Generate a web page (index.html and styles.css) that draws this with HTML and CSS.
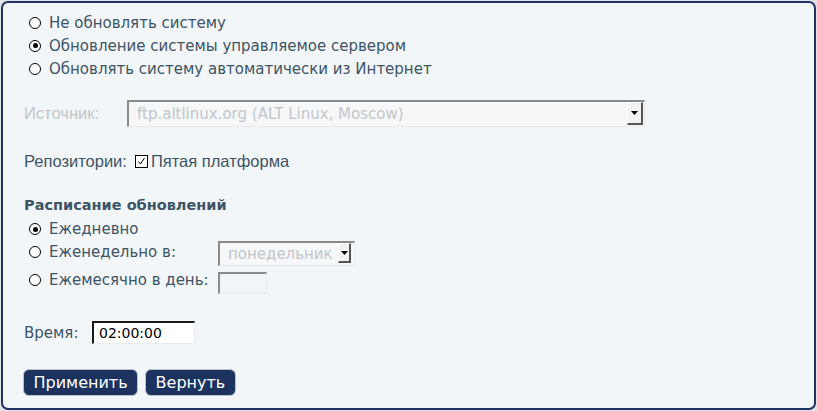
FILE: index.html
```html
<!DOCTYPE html>
<html>
<head>
<meta charset="utf-8">
<link rel="stylesheet" href="styles.css">
</head>
<body>
<div class="panel">
  <div class="radios top">
    <label class="radio"><span class="rb"></span>Не обновлять систему</label>
    <label class="radio"><span class="rb on"></span>Обновление системы управляемое сервером</label>
    <label class="radio"><span class="rb"></span>Обновлять систему автоматически из Интернет</label>
  </div>
  <div class="row source">
    <span class="lbl narrow disabled">Источник:</span>
    <div class="select big"><span class="val">ftp.altlinux.org (ALT Linux, Moscow)</span><span class="arrow"><svg width="7" height="4" viewBox="0 0 7 4"><path d="M0 0h7L3.5 4z" fill="#000"/></svg></span></div>
  </div>
  <div class="row repo">
    <span class="lbl narrow">Репозитории:</span>
    <span class="cb"><svg width="11" height="11" viewBox="0 0 11 11"><path d="M2.5 5.5l2 2.5 4-6" fill="none" stroke="#000" stroke-width="1"/></svg></span>
    <span class="narrow">Пятая платформа</span>
  </div>
  <div class="sched">
    <div class="heading">Расписание обновлений</div>
    <label class="radio r1"><span class="rb on"></span>Ежедневно</label>
    <div class="srow r2">
      <label class="radio"><span class="rb"></span>Еженедельно в:</label>
      <div class="select small"><span class="val">понедельник</span><span class="arrow"><svg width="7" height="4" viewBox="0 0 7 4"><path d="M0 0h7L3.5 4z" fill="#000"/></svg></span></div>
    </div>
    <div class="srow r3">
      <label class="radio"><span class="rb"></span>Ежемесячно в день:</label>
      <div class="field"></div>
    </div>
  </div>
  <div class="row time">
    <span class="lbl">Время:</span>
    <div class="timebox">02:00:00</div>
  </div>
  <div class="buttons">
    <button class="btn">Применить</button>
    <button class="btn">Вернуть</button>
  </div>
</div>
</body>
</html>
```
FILE: styles.css
```css
html, body { margin: 0; padding: 0; }
body {
  background: #dfe3e8;
  width: 817px;
  height: 411px;
  padding: 1px;
  box-sizing: border-box;
  font-family: "DejaVu Sans", sans-serif;
  font-size: 15px;
  color: #3d5466;
}
.panel {
  height: 409px;
  box-sizing: border-box;
  border: 2px solid #1f3360;
  border-radius: 7px;
  background: #f3f6f8;
  padding: 8px 0 0 21px;
}
.narrow { font-family: "Liberation Sans Narrow", "Liberation Sans", sans-serif; font-size: 16.5px; }
.disabled { color: #c2c6ca; }
.radios.top { display: flex; flex-direction: column; }
.radio { display: flex; align-items: center; height: 23px; padding-left: 5px; }
.rb {
  width: 10px; height: 10px; border: 1px solid #000; border-radius: 50%;
  background: #fff; margin-right: 8px; position: relative; flex: none;
}
.rb.on::after {
  content: ""; position: absolute; left: 2.5px; top: 2.5px; width: 5px; height: 5px;
  background: #000; border-radius: 50%;
}
.row { display: flex; align-items: center; }
.source { margin-top: 20px; height: 27px; }
.source .lbl { width: 103px; }
.select {
  box-sizing: border-box;
  border-top: 2px solid #8a8a8a; border-left: 2px solid #8a8a8a;
  border-right: 1px solid #e8eaec; border-bottom: 1px solid #e8eaec;
  display: flex; align-items: center; color: #c2c6ca; background: #f5f7f9;
}
.select.big { width: 518px; height: 27px; padding-left: 8px; }
.select .val { flex: 1; white-space: nowrap; overflow: hidden; }
.arrow {
  width: 16px; height: 23px; background: #f0f2f4; box-sizing: border-box;
  border-right: 2px solid #555; border-bottom: 2px solid #555;
  border-top: 1px solid #fff; border-left: 1px solid #fff;
  display: flex; align-items: center; justify-content: center; margin-right: 1px;
  align-self: flex-start; flex: none;
}
.repo { margin-top: 21px; height: 26px; color: #3d5466; }
.repo .lbl { margin-right: 8px; }
.cb {
  width: 11px; height: 11px; border: 1px solid #000; background: #fff;
  display: inline-flex; margin-right: 3px;
}
.sched { margin-top: 21px; }
.heading { font-weight: bold; font-size: 14.5px; height: 20px; line-height: 20px; }
.r1 { height: 22px; margin-top: 3px; }
.srow { display: flex; align-items: flex-start; }
.srow .radio { width: 194px; box-sizing: border-box; }
.r2 { height: 25px; margin-top: 1px; }
.r2 .radio { height: 22px; }
.select.small { width: 137px; height: 25px; padding-left: 8px; }
.select.small .arrow { height: 20px; width: 13px; margin: 0 3px 0 2px; }
.r3 { height: 28px; }
.r3 .radio { height: 28px; }
.field {
  width: 49px; height: 22px; box-sizing: border-box; margin-top: 6px;
  border-top: 2px solid #8a8a8a; border-left: 2px solid #8a8a8a;
  border-right: 1px solid #e8eaec; border-bottom: 1px solid #e8eaec;
}
.time { margin-top: 27px; height: 23px; }
.time .lbl { width: 68px; }
.timebox {
  width: 103px; height: 23px; box-sizing: border-box; background: #fff;
  border-top: 2px solid #1a1a1a; border-left: 2px solid #1a1a1a;
  border-right: 1px solid #e8eaec; border-bottom: 1px solid #e8eaec;
  color: #000; font-size: 14px; padding-left: 5px; line-height: 20px;
}
.buttons { margin-top: 25px; margin-left: -1px; display: flex; gap: 7px; }
.btn {
  font-family: "DejaVu Sans", sans-serif; font-size: 16px; color: #fff;
  background: #1c3360; border: 1px solid #b8c2d0; border-radius: 6px;
  height: 27px; padding: 0 9.5px; margin: 0; line-height: 24px;
}
```
